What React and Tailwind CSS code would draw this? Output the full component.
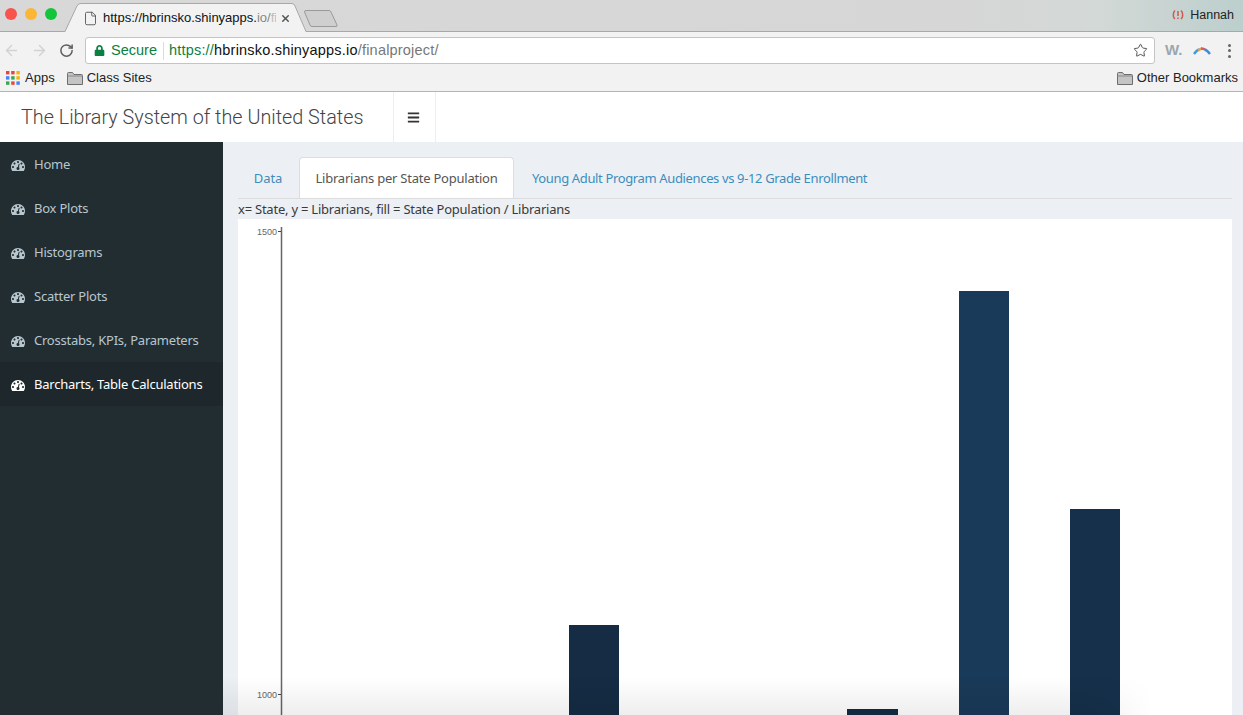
import React from "react";
import { FaBars, FaLock } from "react-icons/fa";
import { ArrowLeft, ArrowRight, RotateCw, Star, File, X } from "lucide-react";

const sans = "[font-family:'Liberation_Sans',Arial,sans-serif]";
const nav = ["Home", "Box Plots", "Histograms", "Scatter Plots", "Crosstabs, KPIs, Parameters", "Barcharts, Table Calculations"];

function Gauge() {
  return (
    <svg width="14" height="14" viewBox="0 0 1792 1792" fill="currentColor" className="shrink-0">
      <path d="M384 1152q0-53-37.500-90.500t-90.500-37.500-90.500 37.500-37.500 90.500 37.500 90.500 90.500 37.500 90.500-37.500 37.500-90.500zm192-448q0-53-37.500-90.500t-90.500-37.500-90.500 37.500-37.500 90.500 37.500 90.500 90.500 37.500 90.500-37.500 37.500-90.500zm428 481l101-382q6-26-7.500-48.500t-38.500-29.500-48 6.500-30 39.500l-101 382q-60 5-107 43.500t-63 98.500q-20 77 20 146t117 89 146-20 89-117q16-60-6-117t-72-91zm660-33q0-53-37.500-90.500t-90.500-37.500-90.500 37.500-37.500 90.500 37.500 90.500 90.500 37.500 90.500-37.500 37.500-90.500zm-640-640q0-53-37.500-90.500t-90.500-37.500-90.500 37.500-37.500 90.500 37.500 90.500 90.500 37.500 90.500-37.500 37.500-90.500zm448 192q0-53-37.500-90.500t-90.500-37.500-90.500 37.500-37.500 90.500 37.500 90.500 90.500 37.500 90.500-37.500 37.500-90.500zm320 448q0 261-141 483-19 29-54 29h-1402q-35 0-54-29-141-221-141-483 0-182 71-348t191-286 286-191 348-71 348 71 286 191 191 286 71 348z" />
    </svg>
  );
}

function Folder() {
  return (
    <svg width="16" height="13" viewBox="0 0 16 13" className="shrink-0">
      <path d="M.5 12.500V1.500q0-1 1-1h4l1.500 2h7.500q1 0 1 1v9z" fill="#c4c4c4" stroke="#6e6e6e" />
      <path d="M.5 4h15" stroke="#8a8a8a" />
    </svg>
  );
}

function AppsGrid() {
  const colors = ["#e8453c", "#e8453c", "#f4b400", "#4285f4", "#34a853", "#f4b400", "#34a853", "#e8453c", "#4285f4"];
  return (
    <svg width="14" height="14" viewBox="0 0 14 14" className="shrink-0">
      {colors.map((c, i) => (
        <rect key={i} x={(i % 3) * 5.2} y={Math.floor(i / 3) * 5.2} width="3.4" height="3.4" fill={c} />
      ))}
    </svg>
  );
}

function TabShape() {
  return (
    <svg width="260" height="32" viewBox="0 0 260 32" className="absolute left-[60px] top-0">
      <path d="M5 32L17 6q1-2.500 4-2.500H232q2 0 3 2.500L246 32z" fill="#f2f2f2" />
      <path d="M0 31.500H5L17 6q1-2.500 4-2.500H232q2 0 3 2.500L246 31.500H260" fill="none" stroke="#a8a8a8" />
    </svg>
  );
}

function NewTab() {
  return (
    <svg width="36" height="18" viewBox="0 0 36 18" className="absolute left-[303px] top-[10px]">
      <path d="M1.500 2q0-1.500 1.500-1.500H26q1.500 0 2 1.500L34 15q.5 1.500-1 1.500H9q-1.500 0-2-1.500z" fill="#cfcfcf" stroke="#9a9a9a" />
    </svg>
  );
}

export default function App() {
  return (
    <div className={`relative flex h-[715px] w-full flex-col overflow-hidden bg-white ${sans}`}>
      {/* tab strip */}
      <div className="relative h-[32px] shrink-0 border-b border-[#a8a8a8] bg-[linear-gradient(90deg,#d8d8d8_0%,#d6d6d6_78%,#d3d9d6_88%,#bccfcd_100%)]">
        <div className="absolute left-[5px] top-[8px] flex gap-[8px]">
          <span className="h-[12px] w-[12px] rounded-full bg-[#f7544e]" />
          <span className="h-[12px] w-[12px] rounded-full bg-[#fbb637]" />
          <span className="h-[12px] w-[12px] rounded-full bg-[#14c43c]" />
        </div>
        <TabShape />
        <NewTab />
        <div className="absolute left-[83px] top-[10px] flex items-center">
          <File size={15} strokeWidth={1.3} className="text-[#444]" />
          <span className="ml-[5px] w-[173px] overflow-hidden whitespace-nowrap text-[13px] leading-[16px] text-[#111]">
            https://hbrinsko.shinyapps.<span className="text-[#888]">io/</span><span className="text-[#bbb]">fi</span>
          </span>
          <X size={11} strokeWidth={3.2} className="ml-[4px] text-[#555]" />
        </div>
        <div className="absolute right-[9px] top-[7px] flex items-center gap-[6px]">
          <svg width="12" height="12" viewBox="0 0 12 12" fill="none" stroke="#d0584e" strokeWidth="1.500">
            <path d="M3 1.500Q.8 3.500 1.500 7.500q.3 1.500 1.500 2.500" />
            <path d="M9 1.500Q11.200 3.500 10.500 7.500q-.3 1.500-1.500 2.500" />
            <path d="M6 2v5M6 8.500v1.500" />
          </svg>
          <span className="text-[12.500px] leading-[16px] text-[#222]">Hannah</span>
        </div>
      </div>
      {/* toolbar */}
      <div className="flex h-[33px] shrink-0 items-center bg-[#f2f2f2] pt-[4px]">
        <ArrowLeft size={17} strokeWidth={2} className="ml-[3px] text-[#d2d2d2]" />
        <ArrowRight size={17} strokeWidth={2} className="ml-[11px] text-[#d2d2d2]" />
        <RotateCw size={15} strokeWidth={2.4} className="ml-[11px] text-[#5f5f5f]" />
        <div className="ml-[11px] flex h-[27px] w-[1070px] items-center rounded-[3px] border border-[#c4c4c4] bg-white">
          <FaLock size={11} className="ml-[8px] text-[#0b8043]" />
          <span className="ml-[6px] text-[14.500px] text-[#0b8043]">Secure</span>
          <span className="ml-[6px] mr-[5px] h-[18px] w-px bg-[#dcdcdc]" />
          <span className="text-[14.500px] tracking-[0.2px] text-[#111]">
            <span className="text-[#0b8043]">https://</span>hbrinsko.shinyapps.io<span className="text-[#777]">/finalproject/</span>
          </span>
          <Star size={15} strokeWidth={1.6} className="ml-auto mr-[6px] text-[#555]" />
        </div>
        <span className="ml-[10px] text-[15px] font-bold text-[#9aa7ae]">W.</span>
        <svg width="18" height="8" viewBox="0 0 18 8" className="ml-[10px]">
          <path d="M1 7Q4 3 6 2.500" fill="none" stroke="#3b9ae1" strokeWidth="2.400" />
          <path d="M5 3.500Q7 2 9 1.500" fill="none" stroke="#e8a24c" strokeWidth="2.400" />
          <path d="M8 1.500Q10 1.500 12 2.500" fill="none" stroke="#e0565c" strokeWidth="2.400" />
          <path d="M11.500 2.500Q14 3 17 7" fill="none" stroke="#3b8fd8" strokeWidth="2.400" />
        </svg>
        <span className="ml-[17px] flex flex-col gap-[2.500px]">
          <span className="h-[3px] w-[3px] rounded-full bg-[#666]" />
          <span className="h-[3px] w-[3px] rounded-full bg-[#666]" />
          <span className="h-[3px] w-[3px] rounded-full bg-[#666]" />
        </span>
      </div>
      {/* bookmarks */}
      <div className="flex h-[27px] shrink-0 items-center border-b border-[#b5b5b5] bg-[#f2f2f2] text-[13px] text-[#222]">
        <span className="ml-[6px]"><AppsGrid /></span>
        <span className="ml-[5px]">Apps</span>
        <span className="ml-[12px]"><Folder /></span>
        <span className="ml-[4px]">Class Sites</span>
        <span className="ml-auto"><Folder /></span>
        <span className="ml-[4px] mr-[5px]">Other Bookmarks</span>
      </div>
      {/* app header */}
      <div className="flex h-[50px] shrink-0 items-stretch bg-white">
        <div className="flex w-[393px] items-center pl-[21px] pt-[2px] text-[19.800px] font-light text-[#444] [font-family:Roboto,sans-serif]">
          The Library System of the United States
        </div>
        <div className="flex w-[43px] items-center justify-center border-x border-[#eeeeee] pr-[2px]">
          <FaBars size={13} className="text-[#333]" />
        </div>
      </div>
      {/* body */}
      <div className="flex min-h-0 flex-1 [font-family:'Noto_Sans',sans-serif]">
        <aside className="w-[223px] shrink-0 bg-[#222d32]">
          {nav.map((n, i) => {
            const active = i === nav.length - 1;
            return (
              <div key={n} className={`flex h-[44px] items-center pl-[11px] pt-px text-[13px] tracking-[-0.23px] ${active ? "bg-[#1e282c] text-white" : "text-[#b8c7ce]"}`}>
                <Gauge />
                <span className="ml-[9px]">{n}</span>
              </div>
            );
          })}
        </aside>
        <main className="flex min-w-0 flex-1 flex-col bg-[#ecf0f5] pl-[15px] pr-[11px]">
          <div className="mt-[15px] flex h-[42px] shrink-0 items-stretch border-b border-[#dddddd] pl-px text-[13px] text-[#3c8dbc]">
            <div className="flex w-[58px] items-center justify-center pt-[2px] tracking-[-0.1px]">Data</div>
            <div className="ml-[2px] flex w-[215px] items-center justify-center rounded-t-[4px] border-x border-t border-[#dddddd] bg-white pt-px tracking-[-0.23px] text-[#555]">Librarians per State Population</div>
            <div className="flex items-center pl-[18px] pt-[2px] tracking-[-0.36px]">Young Adult Program Audiences vs 9-12 Grade Enrollment</div>
          </div>
          <div className="h-[20px] shrink-0 text-[13px] leading-[20px] tracking-[-0.23px] text-[#3a3a3a]">x= State, y = Librarians, fill = State Population / Librarians</div>
          <div className="min-h-0 flex-1 bg-white">
            <svg width="994" height="496" viewBox="0 0 994 496" className="block">
              <line x1="43.500" y1="8" x2="43.500" y2="496" stroke="#666" strokeWidth="1.500" />
              <line x1="40" y1="12.500" x2="43" y2="12.500" stroke="#444" />
              <line x1="40" y1="475.500" x2="43" y2="475.500" stroke="#444" />
              <text x="39" y="16" textAnchor="end" fontSize="9" fill="#666" fontFamily="Liberation Sans">1500</text>
              <text x="39" y="479" textAnchor="end" fontSize="9" fill="#666" fontFamily="Liberation Sans">1000</text>
              <rect x="331" y="406" width="50" height="90" fill="#152c44" />
              <rect x="609" y="490" width="51" height="6" fill="#152c44" />
              <rect x="721" y="72" width="50" height="424" fill="#1a3a59" />
              <rect x="832" y="290" width="50" height="206" fill="#16304b" />
            </svg>
          </div>
        </main>
      </div>
      {/* screenshot shadow at the bottom edge */}
      <div className="pointer-events-none absolute bottom-0 left-[223px] h-[38px] w-[930px] bg-[linear-gradient(to_bottom,transparent,rgba(0,0,0,0.065))] [mask-image:linear-gradient(to_right,black_92%,transparent)]" />
    </div>
  );
}
